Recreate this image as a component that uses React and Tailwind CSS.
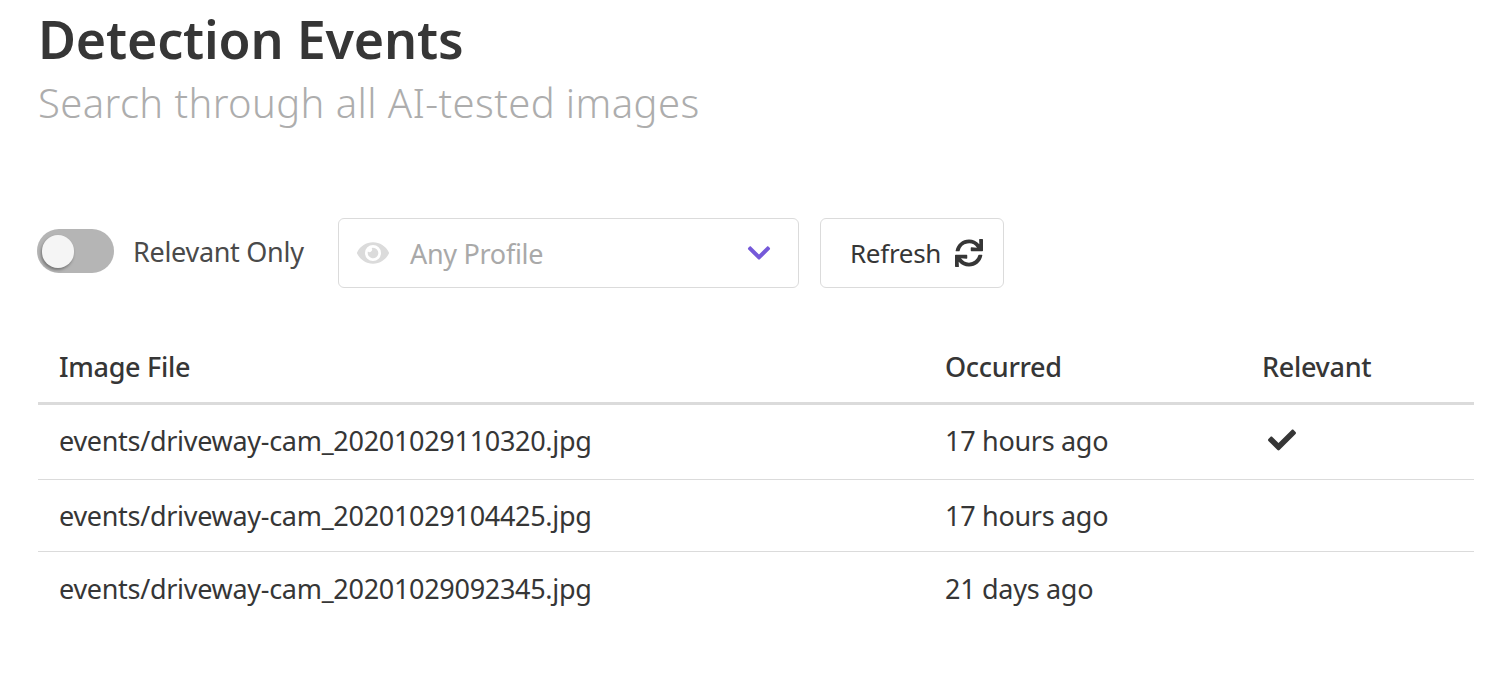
import { FaCheck, FaChevronDown, FaEye, FaSync } from "react-icons/fa";

const events = [
  { file: "events/driveway-cam_20201029110320.jpg", occurred: "17 hours ago", relevant: true, cell: "h-[76px]" },
  { file: "events/driveway-cam_20201029104425.jpg", occurred: "17 hours ago", relevant: false, cell: "h-[72px] pt-[2px]" },
  { file: "events/driveway-cam_20201029092345.jpg", occurred: "21 days ago", relevant: false, cell: "h-[72px] pt-[3px]" },
];

export default function App() {
  return (
    <div className="min-h-screen bg-white pl-[38px] pr-[37px] font-['Noto_Sans',sans-serif] text-[#363636]">
      <h1 className="pt-[7px] text-[52px] leading-[64px] font-semibold tracking-[-0.2px]">Detection Events</h1>
      <h2 className="mt-[4px] text-[40px] leading-[56px] font-light tracking-[0.4px] text-[#adadad]">
        Search through all AI-tested images
      </h2>

      <div className="mt-[87px] flex items-start">
        <div className="mt-[10px] flex items-center">
          <div className="-ml-[1px] flex h-[44px] w-[77px] items-center rounded-full bg-[#b5b5b5] pl-[5px]">
            <div className="h-[33px] w-[32px] rounded-full bg-[#f5f5f5] shadow-[-1px_2px_3px_rgba(0,0,0,0.35)]" />
          </div>
          <span className="ml-[19px] w-[170px] whitespace-nowrap pt-[2px] text-[27px] leading-[44px] tracking-[-0.3px] text-[#4a4a4a]">Relevant Only</span>
        </div>

        <div className="ml-[35px] flex h-[70px] w-[461px] items-center rounded-[6px] border border-[#dbdbdb] pl-[18px] pr-[26px]">
          <FaEye className="h-[32px] w-[32px] text-[#dbdbdb]" />
          <span className="ml-[21px] pt-[2px] text-[27px] tracking-[-0.3px] text-[#a9a9a9]">Any Profile</span>
          <FaChevronDown className="ml-auto h-[26px] w-[26px] text-[#7559d9]" />
        </div>

        <button className="ml-[21px] flex h-[70px] w-[184px] items-center gap-[14px] rounded-[6px] border border-[#dbdbdb] bg-white pl-[29px] text-[26px] tracking-[-0.3px] text-[#363636]">
          Refresh
          <FaSync className="h-[28px] w-[28px]" />
        </button>
      </div>

      <table className="mt-[44px] w-full table-fixed border-collapse text-[27px] tracking-[-0.3px]">
        <thead>
          <tr className="border-b-[3px] border-[#dbdbdb] text-left">
            <th className="h-[71px] w-[886px] pl-[21px] font-medium">Image File</th>
            <th className="w-[317px] pl-[21px] font-medium">Occurred</th>
            <th className="pl-[21px] font-medium">Relevant</th>
          </tr>
        </thead>
        <tbody>
          {events.map((e, i) => (
            <tr key={e.file} className={i < 2 ? "border-b border-[#dbdbdb]" : ""}>
              <td className={`pl-[21px] ${e.cell}`}>{e.file}</td>
              <td className={`pl-[21px] ${e.cell}`}>{e.occurred}</td>
              <td className="pl-[27px]">{e.relevant && <FaCheck className="-mt-[3px] h-[28px] w-[28px]" />}</td>
            </tr>
          ))}
        </tbody>
      </table>
    </div>
  );
}
